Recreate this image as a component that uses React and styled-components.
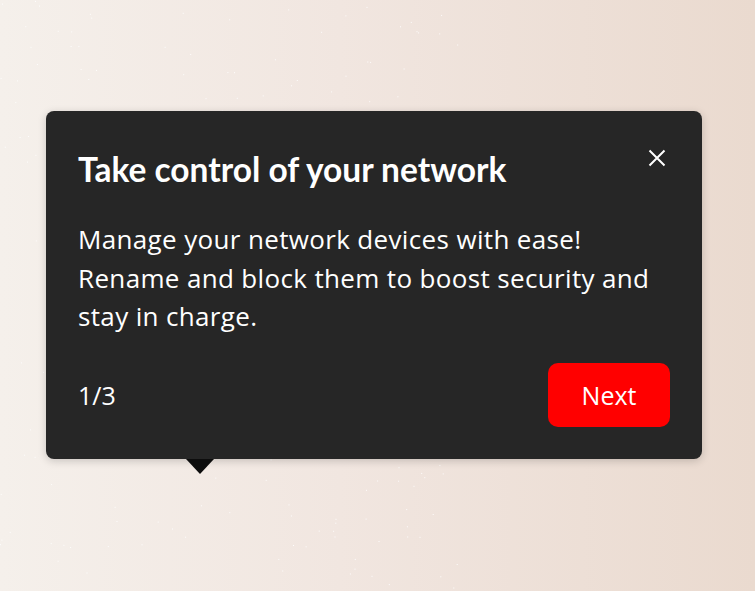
import React from "react";
import styled, { createGlobalStyle } from "styled-components";

const Global = createGlobalStyle`
  html, body { margin: 0; padding: 0; }
  body { font-family: "Open Sans", "Noto Sans", sans-serif; }
`;

const Page = styled.div`
  width: 755px;
  height: 591px;
  background: linear-gradient(90deg, #f5f0eb 0%, #f1e6e0 45%, #eadacf 100%);
  position: relative;
  overflow: hidden;
  padding: 111px 53px 0 46px;
  box-sizing: border-box;
`;

const Speckles = styled.svg`
  position: absolute;
  inset: 0;
  pointer-events: none;
`;

const Card = styled.div`
  position: relative;
  width: 656px;
  height: 348px;
  box-sizing: border-box;
  background: #262626;
  border-radius: 8px;
  box-shadow: 0 2px 8px rgba(0, 0, 0, 0.18);
  padding: 40px 32px 32px 32px;
  display: flex;
  flex-direction: column;
  color: #fff;
`;

const Arrow = styled.div`
  position: absolute;
  left: 140px;
  bottom: -15px;
  width: 0;
  height: 0;
  border-left: 14.5px solid transparent;
  border-right: 14.5px solid transparent;
  border-top: 15px solid #0d0d0d;
`;

const Header = styled.div`
  display: flex;
  justify-content: space-between;
  align-items: flex-start;
`;

const Title = styled.h2`
  margin: 0;
  font-family: "Lato", "Open Sans", sans-serif;
  font-size: 33.5px;
  font-weight: 700;
  line-height: 36px;
`;

const Close = styled.button`
  background: none;
  border: 0;
  padding: 0;
  margin: -2px 4px 0 0;
  width: 18px;
  height: 18px;
  display: flex;
  cursor: pointer;
`;

const Body = styled.p`
  margin: 33px 0 0 0;
  font-size: 26px;
  line-height: 38.5px;
  letter-spacing: 0.35px;
  font-weight: 400;
`;

const Footer = styled.div`
  margin-top: auto;
  display: flex;
  justify-content: space-between;
  align-items: center;
`;

const Counter = styled.span`
  font-size: 25px;
  padding-left: 0;
`;

const NextButton = styled.button`
  background: #ff0000;
  color: #fff;
  border: 0;
  border-radius: 10px;
  width: 122px;
  height: 64px;
  font-family: inherit;
  font-size: 25px;
  cursor: pointer;
`;

function makeDots() {
  let s = 7;
  const rnd = () => {
    s = (s * 16807) % 2147483647;
    return s / 2147483647;
  };
  const dots = [];
  for (let i = 0; i < 260; i++) {
    const x = rnd() * 460;
    const y = rnd() * 591;
    dots.push(<rect key={i} x={x.toFixed(1)} y={y.toFixed(1)} width="1" height="1" fill="#fff" opacity="0.9" />);
  }
  return dots;
}

const dots = makeDots();

export default function App() {
  return (
    <>
      <Global />
      <Page>
        <Speckles width="755" height="591">{dots}</Speckles>
        <Card>
          <Header>
            <Title>Take control of your network</Title>
            <Close aria-label="Close">
              <svg width="18" height="18" viewBox="0 0 18 18">
                <path d="M1.5 1.5 L16.5 16.5 M16.5 1.5 L1.5 16.5" stroke="#fff" strokeWidth="2" />
              </svg>
            </Close>
          </Header>
          <Body>
            Manage your network devices with ease!
            <br />
            Rename and block them to boost security and stay in charge.
          </Body>
          <Footer>
            <Counter>1/3</Counter>
            <NextButton>Next</NextButton>
          </Footer>
          <Arrow />
        </Card>
      </Page>
    </>
  );
}
